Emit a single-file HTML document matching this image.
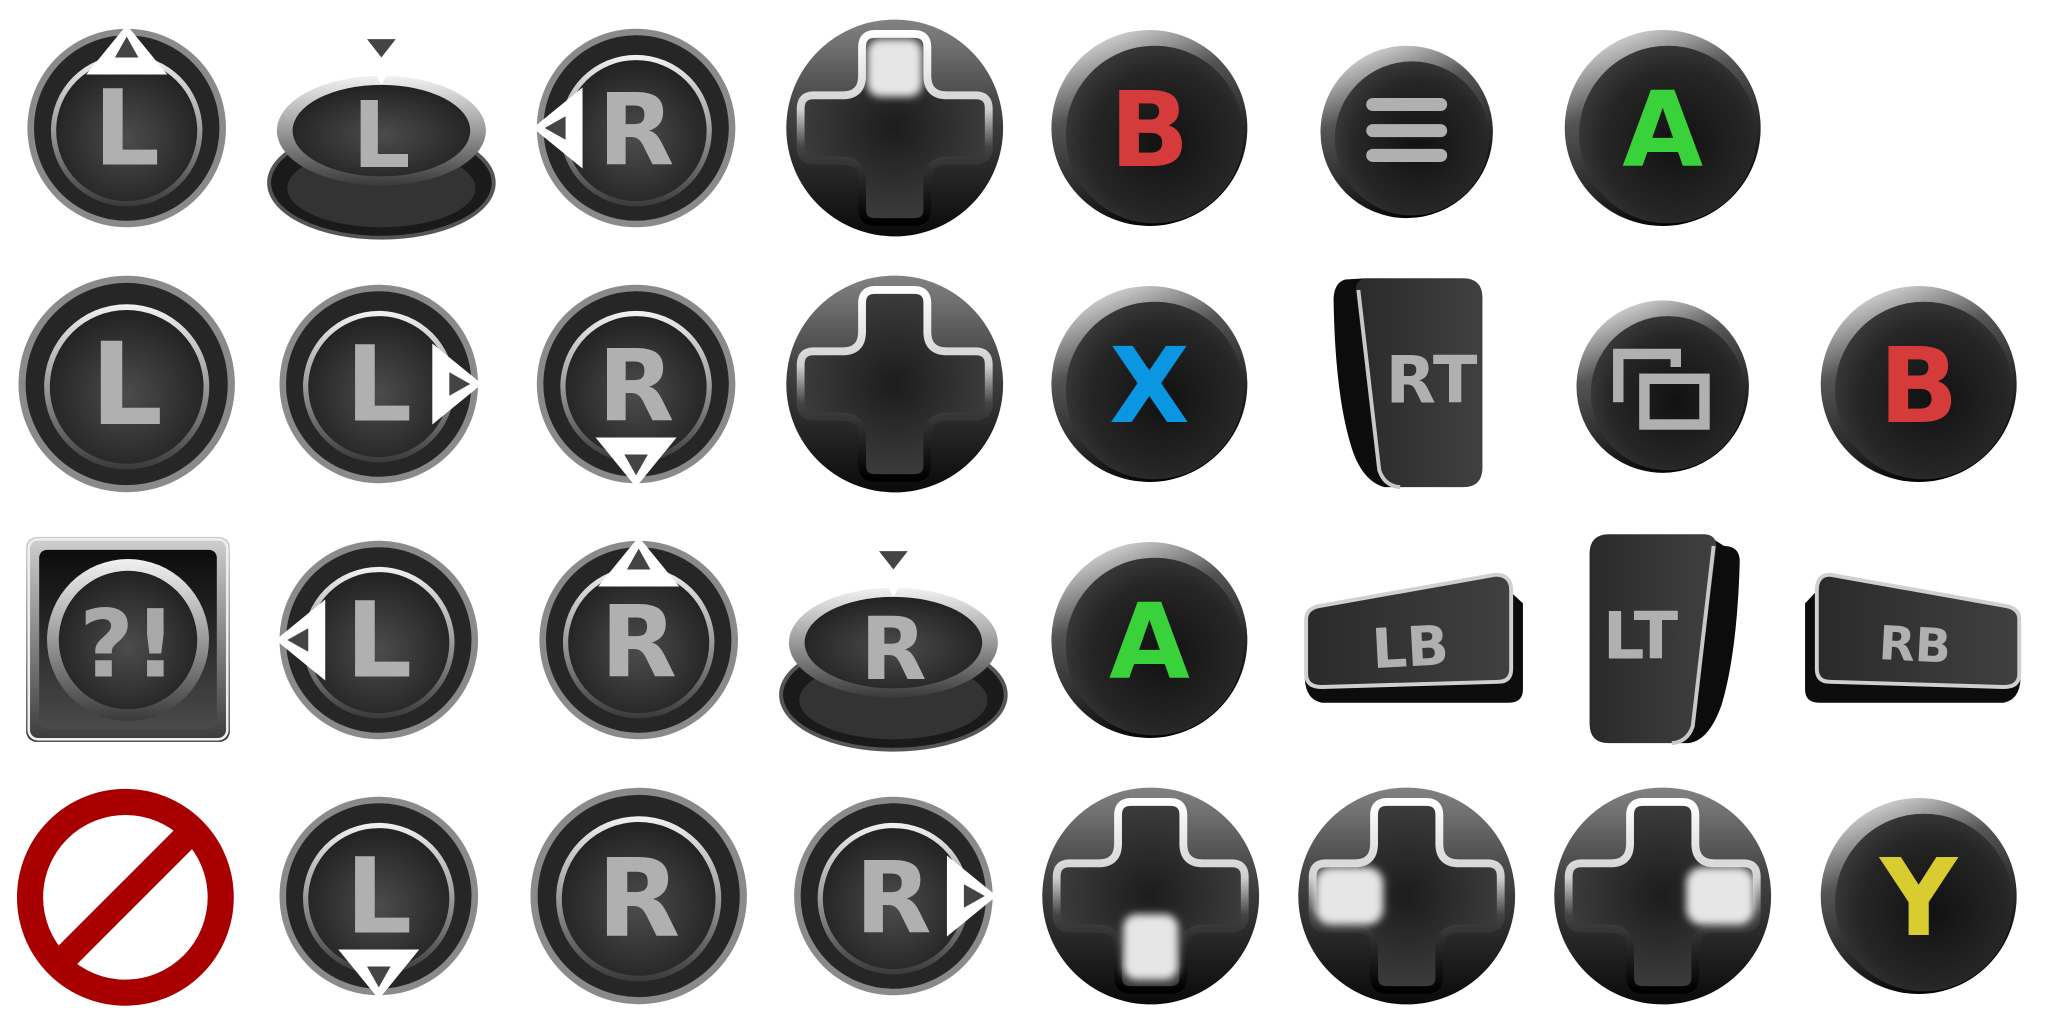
<!DOCTYPE html>
<html><head><meta charset="utf-8"><style>
html,body{margin:0;padding:0;background:#fff;}
svg{display:block;}
text{font-family:"DejaVu Sans","Liberation Sans",sans-serif;font-weight:bold;text-anchor:middle;}
</style></head><body>
<svg width="2048" height="1024" viewBox="0 0 1568 784" xmlns="http://www.w3.org/2000/svg">
<defs>
<linearGradient id="ringg" x1="0" y1="0" x2="0" y2="1"><stop offset="0" stop-color="#f2f2f2"/><stop offset="0.5" stop-color="#9a9a9a"/><stop offset="1" stop-color="#3a3a3a"/></linearGradient>
<radialGradient id="disc" cx="0.5" cy="0.55" r="0.6"><stop offset="0" stop-color="#4c4c4c"/><stop offset="1" stop-color="#1e1e1e"/></radialGradient>
<linearGradient id="faceG" x1="0.2" y1="0" x2="0.6" y2="1"><stop offset="0" stop-color="#e6e6e6"/><stop offset="0.35" stop-color="#555"/><stop offset="1" stop-color="#000"/></linearGradient>
<radialGradient id="faceIn" cx="0.55" cy="0.55" r="0.6"><stop offset="0" stop-color="#111"/><stop offset="0.7" stop-color="#262626"/><stop offset="1" stop-color="#3c3c3c"/></radialGradient>
<linearGradient id="dpadg" x1="0" y1="0" x2="0" y2="1"><stop offset="0" stop-color="#828282"/><stop offset="0.4" stop-color="#444"/><stop offset="1" stop-color="#0a0a0a"/></linearGradient>
<radialGradient id="crossg" cx="0.5" cy="0.5" r="0.5"><stop offset="0" stop-color="#1c1c1c"/><stop offset="1" stop-color="#3c3c3c"/></radialGradient>
<linearGradient id="crossS" gradientUnits="userSpaceOnUse" x1="0" y1="-72" x2="0" y2="72"><stop offset="0" stop-color="#ffffff"/><stop offset="0.4" stop-color="#d0d0d0"/><stop offset="0.6" stop-color="#444"/><stop offset="1" stop-color="#000"/></linearGradient>
<linearGradient id="trig" x1="0" y1="0" x2="1" y2="0"><stop offset="0" stop-color="#2a2a2a"/><stop offset="1" stop-color="#404040"/></linearGradient>
<linearGradient id="boxg" x1="0" y1="0" x2="0" y2="1"><stop offset="0" stop-color="#d0d0d0"/><stop offset="1" stop-color="#3a3a3a"/></linearGradient>
<linearGradient id="boxin" x1="0" y1="0" x2="0" y2="1"><stop offset="0" stop-color="#0c0c0c"/><stop offset="1" stop-color="#4a4a4a"/></linearGradient>
<filter id="bl" x="-50%" y="-50%" width="200%" height="200%"><feGaussianBlur stdDeviation="3"/></filter>
<g id="stick">
<circle r="76" fill="#8a8a8a"/><circle r="71" fill="#262626"/>
<circle r="58" cy="2" fill="url(#ringg)"/><circle r="54" cy="2" fill="url(#disc)"/>
</g>
<g id="arrow">
<polygon points="0,-79 31,-41 -31,-41" fill="#fff"/>
<polygon points="0,-70 9,-54 -9,-54" fill="#444"/>
</g>
<g id="fbtn">
<circle r="75" fill="url(#faceG)"/><circle r="68" cx="4" cy="5" fill="url(#faceIn)"/>
</g>
<g id="small">
<circle r="66" fill="url(#faceG)"/><circle r="59" cx="4" cy="5" fill="url(#faceIn)"/>
</g>
<g id="dpad">
<circle r="83" fill="url(#dpadg)"/>
<path d="M -15,-72 H 15 Q 25,-72 25,-62 V -40 Q 25,-25 40,-25 H 62 Q 72,-25 72,-15 V 15 Q 72,25 62,25 H 40 Q 25,25 25,40 V 62 Q 25,72 15,72 H -15 Q -25,72 -25,62 V 40 Q -25,25 -40,25 H -62 Q -72,25 -72,15 V -15 Q -72,-25 -62,-25 H -40 Q -25,-25 -25,-40 V -62 Q -25,-72 -15,-72 Z" fill="url(#crossg)" stroke="url(#crossS)" stroke-width="6"/>
</g>
<g id="pressed">
<ellipse cx="0" cy="42" rx="86" ry="42" fill="#1a1a1a" stroke="#555" stroke-width="3"/>
<ellipse cx="0" cy="46" rx="72" ry="30" fill="#333"/>
<ellipse cx="0" cy="2" rx="80" ry="42" fill="url(#ringg)"/>
<ellipse cx="0" cy="2" rx="68" ry="35" fill="url(#disc)"/>
<polygon points="-11,-68 11,-68 0,-54" fill="#444"/>
<polygon points="-5,-42 5,-42 0,-33" fill="#fff"/>
</g>
</defs>

<!-- Row 0 -->
<g transform="translate(97,98)"><use href="#stick"/><text y="28" font-size="80" fill="#b0b0b0">L</text><use href="#arrow"/></g>
<g transform="translate(292,98)"><use href="#pressed"/><text y="30" font-size="70" fill="#b0b0b0">L</text></g>
<g transform="translate(487,98)"><use href="#stick"/><text y="28" font-size="76" fill="#b0b0b0">R</text><use href="#arrow" transform="rotate(-90)"/></g>
<g transform="translate(685,98)"><use href="#dpad"/><rect x="-21" y="-68" width="42" height="44" rx="10" fill="#e6e6e6" filter="url(#bl)"/></g>
<g transform="translate(880,98)"><use href="#fbtn"/><text y="29" font-size="80" fill="#d63b3b">B</text></g>
<g transform="translate(1077,101)"><use href="#small"/><g stroke="#b0b0b0" stroke-width="10" stroke-linecap="round"><line x1="-26" y1="-21" x2="26" y2="-21"/><line x1="-26" y1="-1" x2="26" y2="-1"/><line x1="-26" y1="18" x2="26" y2="18"/></g></g>
<g transform="translate(1273,98)"><use href="#fbtn"/><text y="29" font-size="80" fill="#3ad23a">A</text></g>

<!-- Row 1 -->
<g transform="translate(97,294) scale(1.09)"><use href="#stick"/><text y="28" font-size="80" fill="#b0b0b0">L</text></g>
<g transform="translate(290,294)"><use href="#stick"/><text y="28" font-size="80" fill="#b0b0b0">L</text><use href="#arrow" transform="rotate(90)"/></g>
<g transform="translate(487,294)"><use href="#stick"/><text y="28" font-size="76" fill="#b0b0b0">R</text><use href="#arrow" transform="rotate(180)"/></g>
<g transform="translate(685,294)"><use href="#dpad"/></g>
<g transform="translate(880,294)"><use href="#fbtn"/><text y="29" font-size="80" fill="#0a96e0">X</text></g>
<g>
<path d="M1030,214 Q1022,216 1021,228 Q1022,300 1034,340 Q1042,368 1060,373 L1070,373 L1046,213 Z" fill="#0c0c0c"/>
<path d="M1048,213 H1120 Q1135,213 1135,228 V358 Q1135,373 1120,373 H1072 Q1058,373 1055,360 L1038,222 Q1038,213 1048,213 Z" fill="url(#trig)"/>
<path d="M1040,222 L1056,360 Q1060,372 1072,373" fill="none" stroke="#c8c8c8" stroke-width="3"/>
<text x="1096" y="308" font-size="50" fill="#b0b0b0">RT</text>
</g>
<g transform="translate(1273,296)"><use href="#small"/><g fill="none" stroke="#b0b0b0" stroke-width="8"><path d="M-34,12 V-25 H10 V-15"/><rect x="-14" y="-6" width="46" height="35"/></g></g>
<g transform="translate(1469,294)"><use href="#fbtn"/><text y="29" font-size="80" fill="#d63b3b">B</text></g>

<!-- Row 2 -->
<g>
<rect x="20" y="411" width="156" height="157" rx="8" fill="url(#boxg)"/>
<rect x="22" y="413" width="152" height="153" rx="7" fill="none" stroke="#eee" stroke-width="2"/>
<rect x="30" y="421" width="136" height="137" rx="6" fill="url(#boxin)"/>
<g transform="translate(98,490)"><circle r="62" fill="url(#ringg)"/><circle r="53" fill="url(#disc)"/><text y="28" font-size="72" fill="#a8a8a8">?!</text></g>
</g>
<g transform="translate(290,490)"><use href="#stick"/><text y="28" font-size="80" fill="#b0b0b0">L</text><use href="#arrow" transform="rotate(-90)"/></g>
<g transform="translate(489,490)"><use href="#stick"/><text y="28" font-size="76" fill="#b0b0b0">R</text><use href="#arrow"/></g>
<g transform="translate(684,490)"><use href="#pressed"/><text y="30" font-size="66" fill="#b0b0b0">R</text></g>
<g transform="translate(880,490)"><use href="#fbtn"/><text y="29" font-size="80" fill="#3ad23a">A</text></g>
<g>
<path d="M1000,476 L1150,447 L1166,462 L1166,528 Q1166,538 1155,538 L1012,538 Q1000,536 999,520 Z" fill="#0c0c0c"/>
<path d="M1000,474 Q1000,466 1010,464 L1145,440 Q1157,440 1157,452 V512 Q1157,522 1147,522 L1012,526 Q1000,526 1000,516 Z" fill="url(#trig)" stroke="#d0d0d0" stroke-width="3"/>
<text x="1080" y="510" font-size="42" fill="#b0b0b0" transform="rotate(-3 1080 500)">LB</text>
</g>
<g>
<path d="M1320,418 Q1332,418 1332,430 Q1330,500 1318,540 Q1308,568 1292,569 L1282,569 L1306,409 Z" fill="#0c0c0c"/>
<path d="M1304,409 H1232 Q1217,409 1217,424 V554 Q1217,569 1232,569 H1280 Q1294,569 1297,556 L1314,418 Q1314,409 1304,409 Z" fill="url(#trig)"/>
<path d="M1312,418 L1296,556 Q1292,568 1280,569" fill="none" stroke="#c8c8c8" stroke-width="3"/>
<text x="1256" y="504" font-size="50" fill="#b0b0b0">LT</text>
</g>
<g>
<path d="M1546,476 L1396,447 L1382,462 L1382,528 Q1382,538 1393,538 L1534,538 Q1546,536 1547,520 Z" fill="#0c0c0c"/>
<path d="M1546,474 Q1546,466 1536,464 L1401,440 Q1391,440 1391,452 V512 Q1391,522 1401,522 L1534,526 Q1546,526 1546,516 Z" fill="url(#trig)" stroke="#d0d0d0" stroke-width="3"/>
<text x="1466" y="506" font-size="36" fill="#b0b0b0" transform="rotate(3 1466 496)">RB</text>
</g>

<!-- Row 3 -->
<g transform="translate(96,687)"><circle r="73" fill="none" stroke="#a80000" stroke-width="20"/><line x1="-52" y1="52" x2="52" y2="-52" stroke="#a80000" stroke-width="20"/></g>
<g transform="translate(290,686)"><use href="#stick"/><text y="28" font-size="80" fill="#b0b0b0">L</text><use href="#arrow" transform="rotate(180)"/></g>
<g transform="translate(489,686) scale(1.09)"><use href="#stick"/><text y="28" font-size="76" fill="#b0b0b0">R</text></g>
<g transform="translate(684,686)"><use href="#stick"/><text y="28" font-size="76" fill="#b0b0b0">R</text><use href="#arrow" transform="rotate(90)"/></g>
<g transform="translate(881,686)"><use href="#dpad"/><rect x="-21" y="14" width="42" height="50" rx="10" fill="#e6e6e6" filter="url(#bl)"/></g>
<g transform="translate(1077,686)"><use href="#dpad"/><rect x="-70" y="-22" width="52" height="44" rx="12" fill="#e6e6e6" filter="url(#bl)"/></g>
<g transform="translate(1273,686)"><use href="#dpad"/><rect x="18" y="-22" width="52" height="44" rx="12" fill="#e6e6e6" filter="url(#bl)"/></g>
<g transform="translate(1469,686)"><use href="#fbtn"/><text y="30" font-size="82" fill="#d8cc30">Y</text></g>
</svg>
</body></html>
